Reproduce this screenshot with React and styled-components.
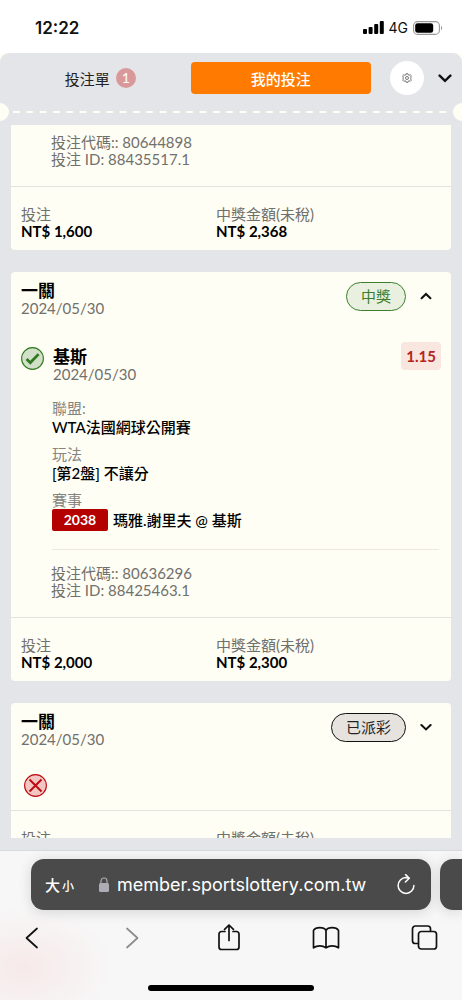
import React, { useState } from 'react';
import styled, { createGlobalStyle } from 'styled-components';

const GlobalStyle = createGlobalStyle`
  * {
    box-sizing: border-box;
  }

  body {
    margin: 0;
    background: #fff;
    color: #111;
    font-family: Lato, 'Noto Sans CJK TC', sans-serif;
    font-size: 15px;
  }

  button {
    padding: 0;
    border: none;
    background: none;
    color: inherit;
    font: inherit;
    cursor: pointer;
  }

  svg {
    display: block;
  }
`;

const Screen = styled.div`
  display: flex;
  flex-direction: column;
  height: 100vh;
  overflow: hidden;
`;

const StatusBar = styled.div`
  display: flex;
  flex: none;
  justify-content: space-between;
  align-items: center;
  height: 53px;
  padding: 2px 19px 0 35px;
  font-family: Inter, sans-serif;
`;

const Clock = styled.time`
  font-size: 17px;
  font-weight: 600;
`;

const StatusIcons = styled.div`
  display: flex;
  align-items: center;
  gap: 5px;
  font-size: 14px;
`;

const SheetBackdrop = styled.div`
  display: flex;
  flex: 1;
  min-height: 0;
  background: #fffef5;
`;

const Sheet = styled.main`
  display: flex;
  flex: 1;
  flex-direction: column;
  min-width: 0;
  padding-bottom: 12px;
  border-radius: 9px 9px 0 0;
  background: #e4e5e8;
`;

const Toolbar = styled.header`
  display: flex;
  flex: none;
  align-items: center;
  height: 50px;
  padding: 0 10px;
`;

const Tab = styled.button`
  display: flex;
  flex: 1;
  justify-content: center;
  align-items: center;
  gap: 6px;
  height: 32px;
  border-radius: 4px;
  background: ${({ $active }) => ($active ? '#ff7a00' : 'transparent')};
  color: ${({ $active }) => ($active ? '#fff' : '#222')};
  font-weight: ${({ $active }) => ($active ? 500 : 400)};
`;

const Count = styled.span`
  width: 20px;
  height: 20px;
  border-radius: 50%;
  background: #d9999b;
  color: #fff;
  font-size: 14px;
  line-height: 20px;
  text-align: center;
`;

const SettingsButton = styled.button`
  display: grid;
  place-items: center;
  width: 34px;
  height: 34px;
  margin: 0 14px 0 19px;
  border-radius: 50%;
  background: #fff;
`;

const Perforation = styled.div`
  display: flex;
  flex: none;
  align-items: center;
  height: 18px;
  margin-bottom: 4px;
`;

const Notch = styled.span`
  width: 9px;
  height: 18px;
  border-radius: ${({ $side }) => ($side === 'left' ? '0 9px 9px 0' : '9px 0 0 9px')};
  background: #fffef5;
`;

const Dashes = styled.span`
  flex: 1;
  height: 2px;
  margin-left: 4px;
  background: linear-gradient(to right, #fffef5 7px, transparent 7px) 0 0 / calc(100% / 33) 2px;
`;

const BetList = styled.div`
  display: flex;
  flex: 1;
  flex-direction: column;
  gap: 22px;
  min-height: 0;
  padding: 0 11px;
  overflow: hidden;
`;

const Card = styled.article`
  flex: none;
  border-radius: ${({ $continued }) => ($continued ? '0 0 4px 4px' : '4px')};
  background: #fffef5;
`;

const CardHeader = styled.div`
  display: flex;
  align-items: flex-start;
  gap: 10px;
  padding: 9px 20px 0 10px;
`;

const Heading = styled.div`
  flex: 1;
`;

const Title = styled.h2`
  margin: 0;
  color: #000;
  font-size: 17px;
  font-weight: 700;
  line-height: 19px;
`;

const DateText = styled.time`
  display: block;
  color: #70706c;
  line-height: 17px;
`;

const Status = styled.span`
  margin-top: 1px;
  padding: 0 14px;
  border: 1px solid ${({ $won }) => ($won ? '#3b7f2c' : '#111')};
  border-radius: 15px;
  background: ${({ $won }) => ($won ? '#eaf0e0' : '#e6e3de')};
  color: ${({ $won }) => ($won ? '#3b7f2c' : '#222')};
  line-height: 27px;
`;

const ToggleButton = styled.button`
  display: grid;
  place-items: center;
  width: 20px;
  height: 29px;
  margin-right: -5px;
`;

const Selection = styled.div`
  display: flex;
  align-items: flex-start;
  gap: 9px;
  padding: 25px 10px 0;

  & > svg {
    margin-top: 5px;
  }

  & > div {
    padding-top: 5px;
  }
`;

const Odds = styled.strong`
  padding: 0 5px;
  border-radius: 4px;
  background: #f9e6df;
  color: #b3241c;
  line-height: 28px;
`;

const Details = styled.dl`
  display: grid;
  gap: 8px;
  margin: 16px 12px 0 41px;
  padding-bottom: 18px;
  border-bottom: 1px solid #ebe9e2;

  dt {
    color: #858580;
    line-height: 18px;
  }

  dd {
    display: flex;
    align-items: center;
    gap: 5px;
    min-height: 20px;
    margin: 0;
    color: #000;
    font-weight: 500;
    line-height: 20px;
  }
`;

const MatchNumber = styled.span`
  width: 56px;
  border-radius: 2px;
  background: #b50000;
  color: #fff;
  font-size: 14px;
  font-weight: 700;
  line-height: 22px;
  text-align: center;
`;

const Codes = styled.div`
  padding: ${({ $continued }) => ($continued ? '9px' : '15px')} 40px 18px;
  color: #70706c;
  line-height: 17px;
`;

const LostMark = styled.div`
  padding: 26px 13px 13px;
`;

const Totals = styled.dl`
  display: grid;
  grid-template-columns: 13fr 15fr;
  margin: 0;
  padding: 19px 10px 10px;
  border-top: 1px solid #e5e3dd;
  line-height: 17px;

  dt {
    color: #70706c;
  }

  dd {
    margin: 0;
    color: #000;
    font-weight: 700;
  }
`;

const BrowserBar = styled.footer`
  flex: none;
  padding-top: 8px;
  border-top: 1px solid #d8d9db;
  background: radial-gradient(ellipse 90px 60px at 24px 116px, #f7e9e9, transparent) #f7f7f7;
`;

const AddressRow = styled.div`
  display: flex;
  gap: 9px;
  padding-left: 31px;
`;

const AddressBar = styled.div`
  display: flex;
  flex: 1;
  align-items: center;
  min-width: 0;
  height: 51px;
  padding: 0 16px 0 14px;
  border-radius: 13px;
  background: #4a4a4a;
  box-shadow: 0 2px 14px rgba(0, 0, 0, 0.14);
  color: #fff;
`;

const NextTab = styled.div`
  width: 22px;
  border-radius: 13px 0 0 13px;
  background: #4a4a4a;
  box-shadow: 0 2px 14px rgba(0, 0, 0, 0.14);
`;

const TextSizeButton = styled.button`
  margin-right: 25px;
  font-weight: 500;
  white-space: nowrap;

  small {
    margin-left: 2px;
    font-size: 12px;
  }
`;

const AddressInput = styled.input`
  flex: 1;
  min-width: 0;
  padding: 0 0 0 8px;
  border: none;
  outline: none;
  background: none;
  color: #fff;
  font-family: Inter, sans-serif;
  font-size: 18px;
`;

const BrowserNav = styled.nav`
  display: flex;
  justify-content: space-between;
  padding: 14px 24px 0 18px;
`;

const NavButton = styled.button`
  display: grid;
  place-items: center;
  width: 28px;
  height: 28px;
  color: ${({ $dim }) => ($dim ? '#8c8c8c' : '#111')};
`;

const HomeIndicator = styled.div`
  width: 36%;
  height: 6px;
  margin: 33px auto 9px;
  border-radius: 3px;
  background: #000;
`;

const Chevron = ({ up, size = 12 }) => (
  <svg width={size} height={size} viewBox="0 0 12 12" fill="none" stroke="#111" strokeWidth="2.1" strokeLinecap="round">
    <path d={up ? 'M1.6 8.2 6 3.9l4.4 4.3' : 'M1.4 4 6 8.4 10.6 4'} />
  </svg>
);

const SignalIcon = () => (
  <svg width="21" height="13" viewBox="0 0 21 13">
    <rect x="0" y="8" width="4" height="5" rx="1" />
    <rect x="5.6" y="6" width="4" height="7" rx="1" />
    <rect x="11.2" y="3" width="4" height="10" rx="1" />
    <rect x="16.8" y="0" width="4" height="13" rx="1" />
  </svg>
);

const BatteryIcon = () => (
  <svg width="30" height="14" viewBox="0 0 30 14">
    <rect x="0.6" y="0.6" width="25.8" height="12.8" rx="4" fill="none" stroke="#999" strokeWidth="1.1" />
    <rect x="2.2" y="2.2" width="18" height="9.6" rx="2.4" />
    <path d="M28 4.8c1.6.7 1.6 3.7 0 4.4Z" fill="#999" />
  </svg>
);

const GearIcon = () => (
  <svg width="10" height="10" viewBox="0 0 24 24" fill="none" stroke="#555" strokeWidth="1.9">
    <path d="M10 1.5h4l.7 3 2.3 1 2.7-1.6 2.8 2.8-1.8 2.7.9 2.2v.8l-.9 2.2 1.8 2.7-2.8 2.8-2.6-1.6-2.3 1-.7 3h-4l-.7-3-2.3-1-2.6 1.6-2.8-2.8 1.6-2.7-.9-2.2v-.8l.9-2.2L1.6 6.7l2.8-2.8L7 5.5l2.3-1Z" />
    <circle cx="12" cy="12" r="3.6" />
  </svg>
);

const WonIcon = () => (
  <svg width="23" height="23" viewBox="0 0 23 23" fill="none" stroke="#2f7a20">
    <circle cx="11.5" cy="11.5" r="10.9" fill="#d3e0c9" strokeWidth="1.1" />
    <path d="m5.6 12 3.7 3.7 8.3-8.6" strokeWidth="2.8" />
  </svg>
);

const LostIcon = () => (
  <svg width="23" height="23" viewBox="0 0 23 23" fill="none" stroke="#bd0a10">
    <circle cx="11.5" cy="11.5" r="10.9" fill="#f2c6c2" strokeWidth="1.1" />
    <path d="m5.5 5.5 12 12m0-12-12 12" strokeWidth="1.9" />
  </svg>
);

const LockIcon = () => (
  <svg width="10" height="15" viewBox="0 0 10 15">
    <rect x="0" y="6" width="10" height="9" rx="1.5" fill="#aeacb5" />
    <path d="M2 6.5V4a3 3 0 0 1 6 0v2.5" fill="none" stroke="#aeacb5" strokeWidth="1.2" />
  </svg>
);

const ReloadIcon = () => (
  <svg width="18" height="21" viewBox="0 0 18 21" fill="none" stroke="#fff" strokeWidth="1.5" strokeLinecap="round" strokeLinejoin="round">
    <path d="M16.9 11.5a7.9 7.9 0 1 1-7.9-7.9l3 .6" />
    <path d="m8.6.6 3.6 3.6-3.8 3.8" />
  </svg>
);

const NavIcon = ({ children }) => (
  <svg width="28" height="28" viewBox="0 0 28 28" fill="none" stroke="currentColor" strokeWidth="1.7" strokeLinecap="round" strokeLinejoin="round">
    {children}
  </svg>
);

const BetTotals = ({ stake, payout }) => (
  <Totals>
    <div>
      <dt>投注</dt>
      <dd>{stake}</dd>
    </div>
    <div>
      <dt>中獎金額(未稅)</dt>
      <dd>{payout}</dd>
    </div>
  </Totals>
);

const BetHeader = ({ status, won, open, onToggle }) => (
  <CardHeader>
    <Heading>
      <Title>一關</Title>
      <DateText>2024/05/30</DateText>
    </Heading>
    <Status $won={won}>{status}</Status>
    <ToggleButton type="button" aria-label="展開" aria-expanded={open} onClick={onToggle}>
      <Chevron up={open} />
    </ToggleButton>
  </CardHeader>
);

const App = () => {
  const [tab, setTab] = useState('mine');
  const [open, setOpen] = useState(true);
  const [paidOpen, setPaidOpen] = useState(false);

  return (
    <Screen>
      <GlobalStyle />
      <StatusBar>
        <Clock>12:22</Clock>
        <StatusIcons>
          <SignalIcon />
          <span>4G</span>
          <BatteryIcon />
        </StatusIcons>
      </StatusBar>

      <SheetBackdrop>
        <Sheet>
          <Toolbar>
            <Tab type="button" $active={tab === 'slip'} onClick={() => setTab('slip')}>
              投注單 <Count>1</Count>
            </Tab>
            <Tab type="button" $active={tab === 'mine'} onClick={() => setTab('mine')}>
              我的投注
            </Tab>
            <SettingsButton type="button" aria-label="設定">
              <GearIcon />
            </SettingsButton>
            <button type="button" aria-label="收合">
              <Chevron size={14} />
            </button>
          </Toolbar>

          <Perforation>
            <Notch $side="left" />
            <Dashes />
            <Notch $side="right" />
          </Perforation>

          <BetList>
            <Card $continued>
              <Codes $continued>
                <div>投注代碼:: 80644898</div>
                <div>投注 ID: 88435517.1</div>
              </Codes>
              <BetTotals stake="NT$ 1,600" payout="NT$ 2,368" />
            </Card>

            <Card>
              <BetHeader status="中獎" won open={open} onToggle={() => setOpen(!open)} />
              {open && (
                <>
                  <Selection>
                    <WonIcon />
                    <Heading>
                      <Title as="h3">基斯</Title>
                      <DateText>2024/05/30</DateText>
                    </Heading>
                    <Odds>1.15</Odds>
                  </Selection>
                  <Details>
                    <div>
                      <dt>聯盟:</dt>
                      <dd>WTA法國網球公開賽</dd>
                    </div>
                    <div>
                      <dt>玩法</dt>
                      <dd>[第2盤] 不讓分</dd>
                    </div>
                    <div>
                      <dt>賽事</dt>
                      <dd>
                        <MatchNumber>2038</MatchNumber>
                        瑪雅.謝里夫 @ 基斯
                      </dd>
                    </div>
                  </Details>
                  <Codes>
                    <div>投注代碼:: 80636296</div>
                    <div>投注 ID: 88425463.1</div>
                  </Codes>
                </>
              )}
              <BetTotals stake="NT$ 2,000" payout="NT$ 2,300" />
            </Card>

            <Card>
              <BetHeader status="已派彩" open={paidOpen} onToggle={() => setPaidOpen(!paidOpen)} />
              <LostMark>
                <LostIcon />
              </LostMark>
              <BetTotals />
            </Card>
          </BetList>
        </Sheet>
      </SheetBackdrop>

      <BrowserBar>
        <AddressRow>
          <AddressBar>
            <TextSizeButton type="button">
              大<small>小</small>
            </TextSizeButton>
            <LockIcon />
            <AddressInput aria-label="網址" defaultValue="member.sportslottery.com.tw" />
            <button type="button" aria-label="重新載入">
              <ReloadIcon />
            </button>
          </AddressBar>
          <NextTab />
        </AddressRow>
        <BrowserNav>
          <NavButton type="button" aria-label="上一頁">
            <NavIcon>
              <path d="M19 4.5 8.5 14 19 23.5" />
            </NavIcon>
          </NavButton>
          <NavButton type="button" aria-label="下一頁" $dim>
            <NavIcon>
              <path d="M11 4.5 21.5 14 11 23.5" />
            </NavIcon>
          </NavButton>
          <NavButton type="button" aria-label="分享">
            <NavIcon>
              <path d="M11 7.5H7.5A2.5 2.5 0 0 0 5 10v13a2.5 2.5 0 0 0 2.5 2.5h15A2.5 2.5 0 0 0 25 23V10a2.5 2.5 0 0 0-2.5-2.5H19M15 16.5V1m-4.4 4.4L15 1l4.4 4.4" />
            </NavIcon>
          </NavButton>
          <NavButton type="button" aria-label="書籤">
            <NavIcon>
              <path d="M14 6.5C12.8 4.4 10.3 3.7 7.8 3.7 5.3 3.7 2.8 4.4 1.5 6.4v17.4c3.5-2.6 9.2-2.6 12.5 0 3.3-2.6 9-2.6 12.5 0V6.4c-1.3-2-3.8-2.7-6.3-2.7-2.5 0-5 .7-6.2 2.8v17.3" />
            </NavIcon>
          </NavButton>
          <NavButton type="button" aria-label="分頁">
            <NavIcon>
              <rect x="8.5" y="7.5" width="18" height="17.5" rx="2.8" />
              <path d="M8 19.5H5.3a2.8 2.8 0 0 1-2.8-2.8V4.8A2.8 2.8 0 0 1 5.3 2h12.4a2.8 2.8 0 0 1 2.8 2.8V7" />
            </NavIcon>
          </NavButton>
        </BrowserNav>
        <HomeIndicator />
      </BrowserBar>
    </Screen>
  );
};

export default App;
